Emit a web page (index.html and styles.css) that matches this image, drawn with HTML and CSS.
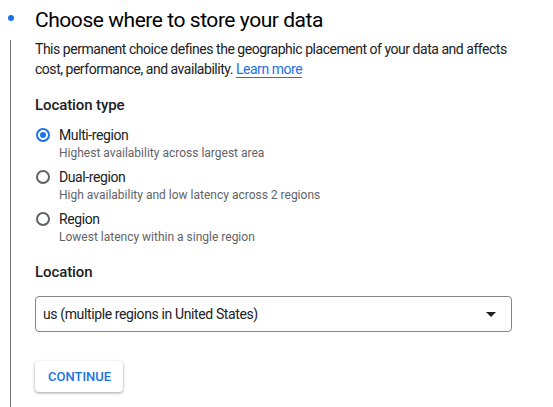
FILE: index.html
```html
<!DOCTYPE html>
<html lang="en">
  <head>
    <meta charset="UTF-8" />
    <title>Choose where to store your data</title>
    <link rel="stylesheet" href="styles.css">
  </head>
  <body>
    <div class="step">
      <div class="marker"><div class="dot"></div></div>
      <h1>Choose where to store your data</h1>

      <div class="rail"></div>
      <div class="body">
        <p class="intro">
          This permanent choice defines the geographic placement of your data and affects<br>
          cost, performance, and availability. <a href="#">Learn more</a>
        </p>

        <h2>Location type</h2>
        <div class="options">
          <label class="option">
            <span class="radio checked"></span>
            <span class="text">
              <span class="name">Multi-region</span>
              <span class="hint">Highest availability across largest area</span>
            </span>
          </label>
          <label class="option">
            <span class="radio"></span>
            <span class="text">
              <span class="name">Dual-region</span>
              <span class="hint">High availability and low latency across 2 regions</span>
            </span>
          </label>
          <label class="option">
            <span class="radio"></span>
            <span class="text">
              <span class="name">Region</span>
              <span class="hint">Lowest latency within a single region</span>
            </span>
          </label>
        </div>

        <h2 class="location">Location</h2>
        <div class="select">
          <span>us (multiple regions in United States)</span>
          <span class="arrow"></span>
        </div>

        <button class="continue">Continue</button>
      </div>
    </div>
  </body>
</html>
```

FILE: styles.css
```css
body {
  margin: 0;
  background: #ffffff;
  font-family: Roboto, "Liberation Sans", sans-serif;
  color: #202124;
}

.step {
  display: grid;
  grid-template-columns: 22px 1fr;
  grid-template-rows: auto 1fr;
  column-gap: 13px;
  box-sizing: border-box;
  height: 100vh;
  padding-top: 6px;
}

.marker {
  display: flex;
  justify-content: center;
}

.dot {
  width: 6px;
  height: 6px;
  margin-top: 9px;
  border-radius: 50%;
  background: #1a73e8;
}

h1 {
  margin: 0;
  font-size: 21px;
  font-weight: 400;
  letter-spacing: -0.45px;
  line-height: 28px;
  color: #000000;
}

.rail {
  width: 1px;
  margin-left: 10px;
  margin-top: 6px;
  background: #757575;
}

.body {
  width: 477px;
}

.intro {
  margin: 5px 0 0;
  font-size: 14px;
  letter-spacing: -0.47px;
  line-height: 20px;
  white-space: nowrap;
}

.intro a {
  color: #1a73e8;
  text-decoration: underline;
  text-underline-offset: 3px;
}

h2 {
  margin: 14px 0 0;
  font-size: 15px;
  font-weight: 500;
  letter-spacing: -0.1px;
  line-height: 24px;
}

.options {
  display: flex;
  flex-direction: column;
  gap: 6px;
  margin-top: 8px;
}

.option {
  display: flex;
  gap: 9px;
  align-items: flex-start;
  padding-left: 1px;
}

.radio {
  display: flex;
  align-items: center;
  justify-content: center;
  box-sizing: border-box;
  width: 14px;
  height: 14px;
  margin-top: 3px;
  border: 2px solid #5f6368;
  border-radius: 50%;
}

.radio.checked {
  border-color: #1a73e8;
}

.radio.checked::after {
  content: "";
  width: 6px;
  height: 6px;
  border-radius: 50%;
  background: #1a73e8;
}

.text {
  display: flex;
  flex-direction: column;
}

.name {
  font-size: 14px;
  letter-spacing: -0.4px;
  line-height: 20px;
}

.hint {
  font-size: 12px;
  line-height: 16px;
  color: #5f6368;
}

.location {
  margin-top: 15px;
}

.select {
  display: flex;
  align-items: center;
  justify-content: space-between;
  box-sizing: border-box;
  height: 36px;
  margin-top: 12px;
  padding: 0 15px 0 7px;
  border: 1px solid #80868b;
  border-radius: 4px;
  font-size: 14px;
  letter-spacing: -0.38px;
}

.arrow {
  border-left: 5px solid transparent;
  border-right: 5px solid transparent;
  border-top: 5px solid #202124;
}

.continue {
  display: block;
  height: 31px;
  margin-top: 29px;
  padding: 0 12px 0 13px;
  border: none;
  border-radius: 4px;
  background: #ffffff;
  box-shadow: 0 1px 2px rgba(60, 64, 67, 0.3), 0 1px 3px 1px rgba(60, 64, 67, 0.15);
  font-family: Roboto, "Liberation Sans", sans-serif;
  font-size: 13px;
  font-weight: 500;
  text-transform: uppercase;
  color: #1a73e8;
}
```
